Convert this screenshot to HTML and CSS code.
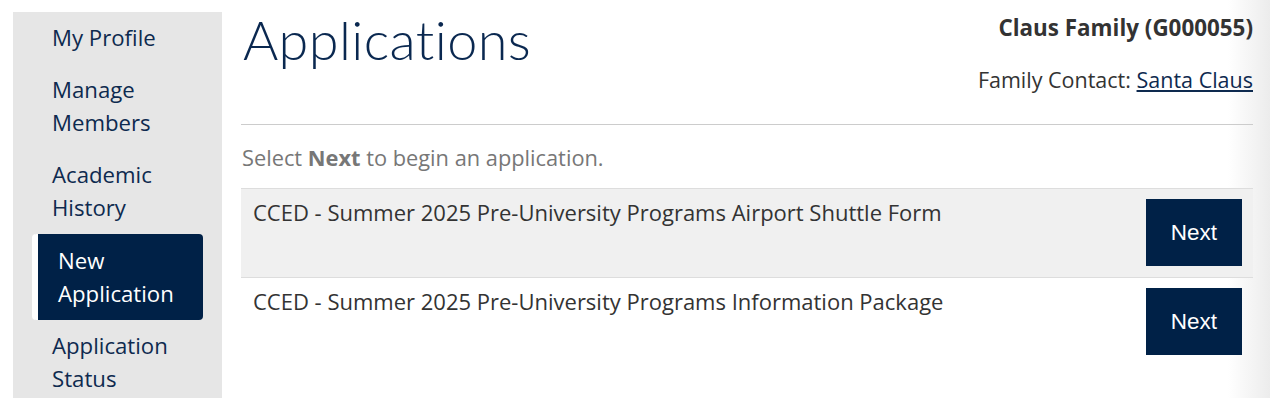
FILE: index.html
```html
<!DOCTYPE html>
<html lang="en">
<head>
<meta charset="utf-8">
<title>Applications</title>
<link rel="stylesheet" href="styles.css">
</head>
<body>
<div class="page">
  <nav class="sidebar">
    <a class="nav-item" href="#">My Profile</a>
    <a class="nav-item" href="#">Manage<br>Members</a>
    <a class="nav-item" href="#">Academic<br>History</a>
    <a class="nav-item active" href="#">New<br>Application</a>
    <a class="nav-item" href="#">Application<br>Status</a>
  </nav>
  <main class="main">
    <header class="head">
      <h1 class="title">Applications</h1>
      <div class="family">
        <div class="family-name">Claus Family (G000055)</div>
        <div class="family-contact">Family Contact: <a href="#">Santa Claus</a></div>
      </div>
    </header>
    <p class="hint">Select <b>Next</b> to begin an application.</p>
    <div class="list">
      <div class="row shaded">
        <span class="row-name">CCED - Summer 2025 Pre-University Programs Airport Shuttle Form</span>
        <button class="next">Next</button>
      </div>
      <div class="row">
        <span class="row-name">CCED - Summer 2025 Pre-University Programs Information Package</span>
        <button class="next">Next</button>
      </div>
    </div>
  </main>
</div>
</body>
</html>
```
FILE: styles.css
```css
html, body {
  margin: 0;
  padding: 0;
  height: 100%;
}
body {
  font-family: "Open Sans", "Liberation Sans", sans-serif;
  background: linear-gradient(to right, #ffffff 0, #ffffff calc(100% - 42px), #ececec 100%);
  overflow: hidden;
}
.page {
  display: flex;
  align-items: flex-start;
  padding: 12px 0 0 13px;
}
.sidebar {
  width: 209px;
  flex: none;
  background: #e6e6e6;
  padding: 0 19px 20px;
  box-sizing: border-box;
  display: flex;
  flex-direction: column;
}
.nav-item {
  display: block;
  padding: 8.5px 0 10.5px 20px;
  font-size: 22.2px;
  line-height: 33px;
  color: #0e2a4f;
  text-decoration: none;
}
.nav-item.active {
  background: #002147;
  color: #ffffff;
  border-left: 6px solid #ffffff;
  border-radius: 4px;
  padding-top: 9.5px;
  padding-bottom: 10.5px;
}
.main {
  flex: 1;
  margin-left: 19px;
  margin-right: 17px;
}
.head {
  display: flex;
  justify-content: space-between;
  align-items: flex-start;
  border-bottom: 1px solid #cccccc;
  height: 112px;
}
.title {
  margin: 0;
  padding-left: 2px;
  font-family: "Lato", "Open Sans", sans-serif;
  font-weight: 300;
  font-size: 54px;
  line-height: 56px;
  color: #0a2850;
  letter-spacing: 0.4px;
}
.family {
  text-align: right;
  font-size: 21.5px;
  color: #333333;
}
.family-name {
  font-weight: 700;
  line-height: 32px;
  font-size: 22.4px;
}
.family-contact {
  margin-top: 20px;
  line-height: 32px;
}
.family-contact a {
  color: #0e2a4f;
}
.hint {
  margin: 19px 0 0 1px;
  font-size: 21.8px;
  line-height: 28px;
  color: #777777;
}
.hint b {
  font-weight: 700;
}
.list {
  margin-top: 16px;
}
.row {
  display: flex;
  justify-content: space-between;
  align-items: flex-start;
  padding: 10px 11px 11px 12px;
}
.row.shaded {
  background: #f0f0f0;
  border-top: 1px solid #dddddd;
  border-bottom: 1px solid #dddddd;
}
.row-name {
  font-size: 22px;
  line-height: 26px;
  color: #333333;
}
.next {
  width: 96px;
  height: 67px;
  border: none;
  border-radius: 0;
  background: #002147;
  color: #ffffff;
  font-family: "Liberation Sans", Arial, sans-serif;
  font-size: 22.5px;
  cursor: pointer;
}
```
